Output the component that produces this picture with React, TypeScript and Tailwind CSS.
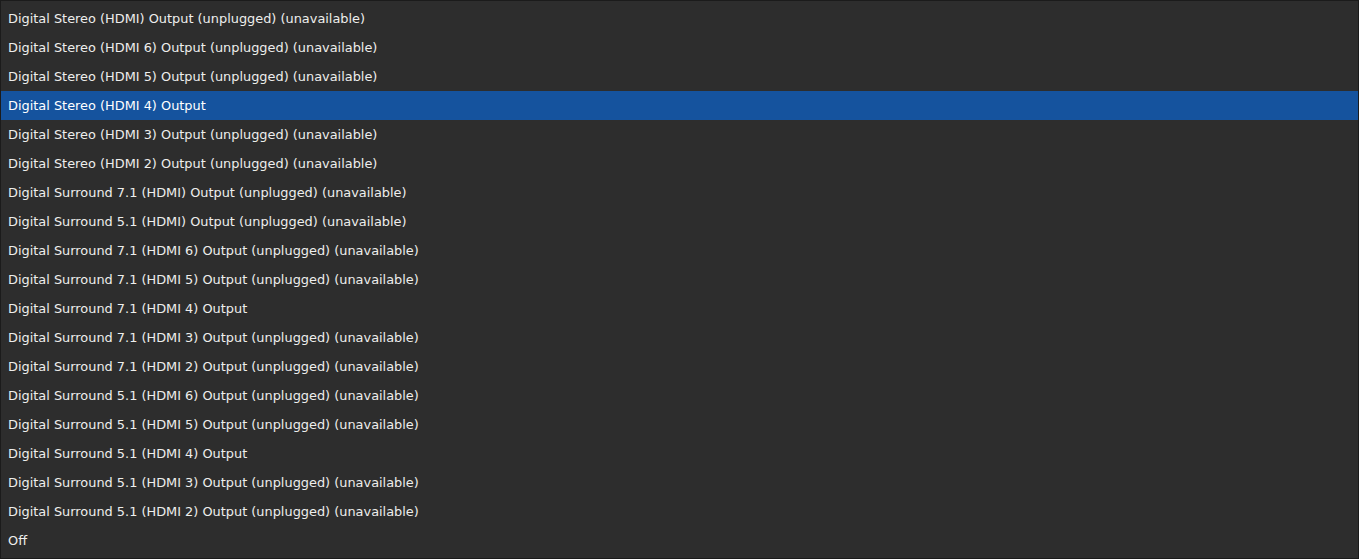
const ITEMS = [
  "Digital Stereo (HDMI) Output (unplugged) (unavailable)",
  "Digital Stereo (HDMI 6) Output (unplugged) (unavailable)",
  "Digital Stereo (HDMI 5) Output (unplugged) (unavailable)",
  "Digital Stereo (HDMI 4) Output",
  "Digital Stereo (HDMI 3) Output (unplugged) (unavailable)",
  "Digital Stereo (HDMI 2) Output (unplugged) (unavailable)",
  "Digital Surround 7.1 (HDMI) Output (unplugged) (unavailable)",
  "Digital Surround 5.1 (HDMI) Output (unplugged) (unavailable)",
  "Digital Surround 7.1 (HDMI 6) Output (unplugged) (unavailable)",
  "Digital Surround 7.1 (HDMI 5) Output (unplugged) (unavailable)",
  "Digital Surround 7.1 (HDMI 4) Output",
  "Digital Surround 7.1 (HDMI 3) Output (unplugged) (unavailable)",
  "Digital Surround 7.1 (HDMI 2) Output (unplugged) (unavailable)",
  "Digital Surround 5.1 (HDMI 6) Output (unplugged) (unavailable)",
  "Digital Surround 5.1 (HDMI 5) Output (unplugged) (unavailable)",
  "Digital Surround 5.1 (HDMI 4) Output",
  "Digital Surround 5.1 (HDMI 3) Output (unplugged) (unavailable)",
  "Digital Surround 5.1 (HDMI 2) Output (unplugged) (unavailable)",
  "Off",
];

const SELECTED = 3;

export default function App() {
  return (
    <div className="w-[1359px] h-[559px] bg-[#2d2d2d] border border-[#1b1b1b] py-[3px] font-['DejaVu_Sans',sans-serif] text-[12.9px] text-[#eeeeec]">
      <ul className="flex flex-col">
        {ITEMS.map((item, i) => (
          <li
            key={i}
            className={
              i === SELECTED
                ? "h-[29px] flex items-center px-[7px] bg-[#15539e] text-white"
                : "h-[29px] flex items-center px-[7px]"
            }
          >
            {item}
          </li>
        ))}
      </ul>
    </div>
  );
}
